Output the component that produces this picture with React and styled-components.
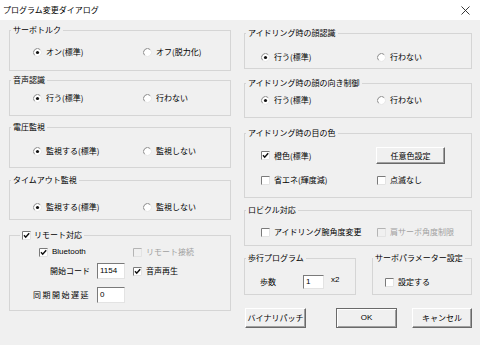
import React from "react";
import styled, { createGlobalStyle } from "styled-components";

const GlobalStyle = createGlobalStyle`
  body {
    margin: 0;
    background: #f0f0f0;
    font-family: "Noto Sans CJK JP", "Noto Sans", sans-serif;
    color: #000;
  }
`;

const Window = styled.div`
  width: 480px;
  height: 345px;
  background: #f0f0f0;
  overflow: hidden;
  font-size: 8px;
  line-height: 10px;
`;

const TitleBar = styled.div`
  height: 20px;
  background: #fff;
  display: flex;
  align-items: center;
  justify-content: space-between;
  padding: 0 10px 0 3px;
`;

const Title = styled.span`
  font-size: 8px;
`;

const Body = styled.div`
  display: grid;
  grid-template-columns: 222px 228px;
  column-gap: 13px;
  padding-left: 9px;
`;

const Column = styled.div`
  display: flex;
  flex-direction: column;
`;

const Group = styled.fieldset`
  box-sizing: border-box;
  margin: ${(p) => p.$mt}px 0 0;
  padding: ${(p) => p.$pt}px 0 0;
  height: ${(p) => p.$h}px;
  width: ${(p) => (p.$w ? `${p.$w}px` : "auto")};
  min-width: 0;
  border: 1px solid #d5d5d5;
`;

const Legend = styled.legend`
  display: flex;
  align-items: center;
  gap: 3px;
  margin-left: ${(p) => (p.$ml === undefined ? 1 : p.$ml)}px;
  padding: 0 2px;
  line-height: 10px;
  white-space: nowrap;
`;

const Row = styled.div`
  display: grid;
  grid-template-columns: ${(p) => p.$col}px auto;
  align-items: center;
  height: ${(p) => p.$h || 12}px;
  margin-top: ${(p) => p.$mt || 0}px;
  padding-left: ${(p) => p.$pl || 0}px;
`;

const Line = styled.div`
  display: grid;
  grid-template-columns: 81px 42px auto;
  align-items: center;
  height: 16px;
  margin-top: ${(p) => p.$mt || 0}px;
`;

const Option = styled.span`
  display: flex;
  align-items: center;
  gap: 4px;
  white-space: nowrap;
  color: ${(p) => (p.$disabled ? "#a0a0a0" : "#000")};
  grid-column: ${(p) => p.$span || "auto"};
  padding-left: ${(p) => p.$pl || 0}px;
`;

const Latin = styled.span`
  font-family: "Liberation Sans", sans-serif;
`;

const FieldLabel = styled.span`
  text-align: right;
  padding-right: 1px;
  letter-spacing: ${(p) => p.$ls || 0}px;
  white-space: nowrap;
`;

const TextBox = styled.div`
  box-sizing: border-box;
  width: ${(p) => p.$w}px;
  height: ${(p) => p.$h}px;
  margin-left: ${(p) => p.$ml || 0}px;
  background: #fff;
  border-top: 1px solid #7a7a7a;
  border-left: 1px solid #7a7a7a;
  border-right: 1px solid #e3e3e3;
  border-bottom: 1px solid #e3e3e3;
  padding-left: 2px;
  display: flex;
  align-items: center;
  font-family: "Liberation Sans", sans-serif;
`;

const Step = styled.div`
  display: flex;
  align-items: center;
  height: 14px;
  padding-left: 15px;
`;

const StepLabel = styled.span`
  width: 43px;
`;

const Times = styled.span`
  margin-left: 7px;
  margin-top: -4px;
  font-family: "Liberation Sans", sans-serif;
`;

const SplitRow = styled.div`
  display: flex;
  justify-content: space-between;
`;

const ButtonRow = styled.div`
  display: flex;
  gap: 15px;
  margin-top: 13px;
  padding-left: 1px;
`;

const Btn = styled.div`
  box-sizing: border-box;
  width: ${(p) => p.$w}px;
  height: ${(p) => p.$h || 20}px;
  margin-left: ${(p) => (p.$push ? "auto" : "0")};
  display: flex;
  align-items: center;
  justify-content: center;
  background: #f0f0f0;
  border: 1px solid;
  border-color: ${(p) =>
    p.$default ? "#6a6a6a" : "#ffffff #696969 #696969 #ffffff"};
  box-shadow: ${(p) =>
    p.$default
      ? "inset 1px 1px #ffffff, inset -1px -1px #a0a0a0"
      : "inset -1px -1px #a0a0a0"};
  white-space: nowrap;
  font-family: ${(p) =>
    p.$latin ? '"Liberation Sans", sans-serif' : "inherit"};
`;

const Radio = ({ on }) => (
  <svg width="9" height="9" viewBox="0 0 9 9">
    <circle cx="4.5" cy="4.5" r="4" fill="#fff" />
    <path d="M1.67 7.33 A4 4 0 0 1 7.33 1.67" fill="none" stroke="#8a8a8a" />
    <path d="M7.33 1.67 A4 4 0 0 1 1.67 7.33" fill="none" stroke="#e6e6e6" />
    {on && <circle cx="4.5" cy="4.5" r="1.6" fill="#111" />}
  </svg>
);

const Check = ({ on, disabled }) => (
  <svg width="9" height="9" viewBox="0 0 9 9">
    <rect x="0" y="0" width="9" height="9" fill={disabled ? "#f0f0f0" : "#fff"} />
    <path d="M0.5 9 V0.5 H9" fill="none" stroke={disabled ? "#b4b4b4" : "#7a7a7a"} />
    <path d="M8.5 0.5 V8.5 H0.5" fill="none" stroke="#e3e3e3" />
    {on && (
      <path d="M2 4.2 L3.7 6.2 L7.2 2.3" fill="none" stroke="#111" strokeWidth="1.5" />
    )}
  </svg>
);

const Close = () => (
  <svg width="9" height="9" viewBox="0 0 9 9">
    <path d="M0.5 0.5 L8.5 8.5 M8.5 0.5 L0.5 8.5" stroke="#222" strokeWidth="0.9" />
  </svg>
);

const Choice = ({ on, children }) => (
  <Option>
    <Radio on={on} />
    {children}
  </Option>
);

const Tick = ({ on, disabled, span, pl, children }) => (
  <Option $disabled={disabled} $span={span} $pl={pl}>
    <Check on={on} disabled={disabled} />
    {children}
  </Option>
);

export default function App() {
  return (
    <Window>
      <GlobalStyle />
      <TitleBar>
        <Title>プログラム変更ダイアログ</Title>
        <Close />
      </TitleBar>
      <Body>
        <Column>
          <Group $mt={5} $h={46} $pt={11}>
            <Legend>サーボトルク</Legend>
            <Row $col={110} $pl={23}>
              <Choice on>オン(標準)</Choice>
              <Choice>オフ(脱力化)</Choice>
            </Row>
          </Group>
          <Group $mt={4} $h={41} $pt={7}>
            <Legend>音声認識</Legend>
            <Row $col={110} $pl={23}>
              <Choice on>行う(標準)</Choice>
              <Choice>行わない</Choice>
            </Row>
          </Group>
          <Group $mt={6} $h={46} $pt={13}>
            <Legend>電圧監視</Legend>
            <Row $col={110} $pl={23}>
              <Choice on>監視する(標準)</Choice>
              <Choice>監視しない</Choice>
            </Row>
          </Group>
          <Group $mt={7} $h={45} $pt={16}>
            <Legend>タイムアウト監視</Legend>
            <Row $col={110} $pl={23}>
              <Choice on>監視する(標準)</Choice>
              <Choice>監視しない</Choice>
            </Row>
          </Group>
          <Group $mt={10} $h={81} $pt={4}>
            <Legend $ml={10}>
              <Check on />
              リモート対応
            </Legend>
            <Line>
              <Tick on span="1 / 3" pl={29}>
                <Latin>Bluetooth</Latin>
              </Tick>
              <Tick disabled>リモート接続</Tick>
            </Line>
            <Line $mt={3}>
              <FieldLabel>開始コード</FieldLabel>
              <TextBox $w={28} $h={16} $ml={6}>1154</TextBox>
              <Tick on>音声再生</Tick>
            </Line>
            <Line $mt={8}>
              <FieldLabel $ls={1.5}>同期開始遅延</FieldLabel>
              <TextBox $w={28} $h={16} $ml={6}>0</TextBox>
            </Line>
          </Group>
        </Column>
        <Column>
          <Group $mt={8} $h={41} $pt={13}>
            <Legend>アイドリング時の顔認識</Legend>
            <Row $col={116} $pl={16}>
              <Choice on>行う(標準)</Choice>
              <Choice>行わない</Choice>
            </Row>
          </Group>
          <Group $mt={9} $h={40} $pt={6}>
            <Legend>アイドリング時の顔の向き制御</Legend>
            <Row $col={116} $pl={16}>
              <Choice on>行う(標準)</Choice>
              <Choice>行わない</Choice>
            </Row>
          </Group>
          <Group $mt={10} $h={70} $pt={9}>
            <Legend>アイドリング時の目の色</Legend>
            <Row $col={115} $pl={16} $h={16}>
              <Tick on>橙色(標準)</Tick>
              <Btn $w={69} $h={17}>任意色設定</Btn>
            </Row>
            <Row $col={116} $pl={16} $h={16} $mt={9}>
              <Tick>省エネ(輝度減)</Tick>
              <Tick>点滅なし</Tick>
            </Row>
          </Group>
          <Group $mt={7} $h={41} $pt={11}>
            <Legend>ロビクル対応</Legend>
            <Row $col={116} $pl={16}>
              <Tick>アイドリング腕角度変更</Tick>
              <Tick disabled>肩サーボ角度制限</Tick>
            </Row>
          </Group>
          <SplitRow>
            <Group $mt={7} $h={42} $pt={12} $w={112}>
              <Legend>歩行プログラム</Legend>
              <Step>
                <StepLabel>歩数</StepLabel>
                <TextBox $w={21} $h={14}>1</TextBox>
                <Times>x2</Times>
              </Step>
            </Group>
            <Group $mt={7} $h={42} $pt={13} $w={100}>
              <Legend $ml={0}>サーボパラメーター設定</Legend>
              <Row $col={90} $pl={12}>
                <Tick>設定する</Tick>
              </Row>
            </Group>
          </SplitRow>
          <ButtonRow>
            <Btn $w={61}>バイナリパッチ</Btn>
            <Btn $w={61} $push $default $latin>
              OK
            </Btn>
            <Btn $w={60}>キャンセル</Btn>
          </ButtonRow>
        </Column>
      </Body>
    </Window>
  );
}
